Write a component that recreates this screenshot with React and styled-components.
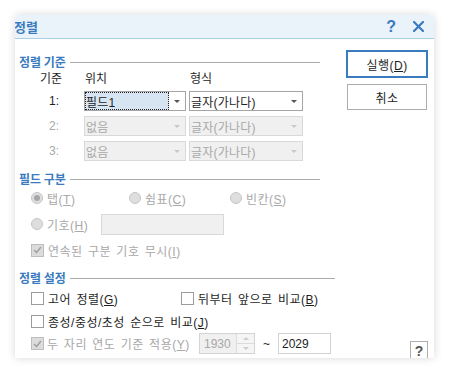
import React from "react";
import styled, { createGlobalStyle } from "styled-components";

const GlobalStyle = createGlobalStyle`
  html, body { margin: 0; padding: 0; background: #fff; }
  body {
    font-family: "Liberation Sans", "Noto Sans CJK KR", sans-serif;
    font-size: 12px;
    color: #1e1e1e;
  }
  * { box-sizing: border-box; }
  u { text-underline-offset: 1px; }
`;

const Stage = styled.div`
  width: 449px;
  height: 373px;
  padding: 15px 0 0 15px;
`;

const Dialog = styled.div`
  width: 419px;
  height: 343px;
  background: #fff;
  border-radius: 5px 5px 0 0;
  box-shadow: 0 0 9px rgba(0, 0, 0, 0.16);
  display: flex;
  flex-direction: column;
  overflow: hidden;
`;

const TitleBar = styled.div`
  height: 24px;
  flex: none;
  background: #eaf2fa;
  border-bottom: 1px solid #a9cfe3;
  display: flex;
  align-items: center;
  padding-right: 10px;
`;

const Title = styled.div`
  flex: 1;
  margin-left: -1px;
  font-family: "Noto Sans CJK KR", sans-serif;
  font-weight: bold;
  font-size: 13px;
  color: #3a7bbf;
`;

const TitleHelp = styled.span`
  font-family: "Liberation Sans", sans-serif;
  font-weight: bold;
  font-size: 16px;
  color: #3a7bbf;
  margin-right: 17px;
  line-height: 1;
`;

const Body = styled.div`
  flex: 1;
  display: flex;
`;

const LeftCol = styled.div`
  width: 332px;
  padding: 14px 0 0 4px;
  display: flex;
  flex-direction: column;
`;

const RightCol = styled.div`
  flex: 1;
  display: flex;
  flex-direction: column;
  align-items: flex-end;
  padding: 12px 7px 0 0;
  gap: 7px;
`;

const SectionHead = styled.div`
  display: flex;
  align-items: center;
  height: 16px;
  margin-top: ${(p) => p.$mt || 0}px;
  margin-right: ${(p) => p.$mr}px;
  font-family: "Noto Sans CJK KR", sans-serif;
  font-weight: bold;
  font-size: 12px;
  color: #3a7bbf;
  &::after {
    content: "";
    flex: 1;
    height: 1px;
    margin: 2px 0 0 4px;
    background: #ababab;
  }
`;

const CritGrid = styled.div`
  display: grid;
  grid-template-columns: 62px 102px 114px;
  grid-auto-rows: 20px;
  grid-template-rows: 17px;
  column-gap: 3px;
  row-gap: 5px;
`;

const ColHead = styled.div`
  padding-top: 3px;
  padding-left: ${(p) => p.$pl || 1}px;
  line-height: 14px;
`;

const RowLabel = styled.div`
  display: flex;
  align-items: center;
  padding-left: 30px;
  color: ${(p) => (p.$disabled ? "#a8a8a8" : "#1e1e1e")};
`;

const Select = styled.div`
  height: 20px;
  display: flex;
  border: 1px solid ${(p) => (p.$disabled ? "#d9d9d9" : "#a5a5a5")};
  background: ${(p) => (p.$disabled ? "#f0f0f0" : "#fff")};
  color: ${(p) => (p.$disabled ? "#a8a8a8" : "#1e1e1e")};
`;

const SelectValue = styled.div`
  flex: 1;
  display: flex;
  align-items: center;
  padding-left: 1px;
  letter-spacing: 0.2px;
  ${(p) =>
    p.$focused &&
    `
    background: #d7e5f3;
    outline: 1px dotted #222;
    outline-offset: -1px;
  `}
`;

const SelectArrow = styled.div`
  width: 16px;
  display: flex;
  align-items: center;
  justify-content: center;
  &::before {
    content: "";
    border-left: 3px solid transparent;
    border-right: 3px solid transparent;
    border-top: 3px solid ${(p) => (p.$disabled ? "#c8c8c8" : "#555")};
  }
`;

const OptRow = styled.div`
  display: flex;
  align-items: center;
  height: ${(p) => p.$h || 20}px;
  margin-top: ${(p) => p.$mt || 0}px;
  padding-left: 12px;
`;

const Option = styled.label`
  display: flex;
  align-items: center;
  gap: ${(p) => p.$gap || 4}px;
  width: ${(p) => (p.$w ? `${p.$w}px` : "auto")};
  flex: none;
  color: ${(p) => (p.$disabled ? "#a8a8a8" : "#1e1e1e")};
  white-space: nowrap;
  letter-spacing: 0.5px;
  word-spacing: 1.5px;
`;

const RadioMark = styled.span`
  width: 12px;
  height: 12px;
  border-radius: 50%;
  border: 1px solid #c6c6c6;
  background: #dedede;
  display: inline-flex;
  align-items: center;
  justify-content: center;
  flex: none;
  &::after {
    content: "";
    width: 6px;
    height: 6px;
    border-radius: 50%;
    background: ${(p) => (p.$checked ? "#a6a6a6" : "transparent")};
  }
`;

const CheckMark = styled.span`
  width: 13px;
  height: 13px;
  flex: none;
  border: 1px solid ${(p) => (p.$disabled ? "#bdbdbd" : "#9c9c9c")};
  background: ${(p) => (p.$disabled ? "#dcdcdc" : "#fff")};
  display: inline-flex;
  align-items: center;
  justify-content: center;
`;

const SymbolInput = styled.div`
  width: 123px;
  height: 21px;
  border: 1px solid #d9d9d9;
  background: #f0f0f0;
`;

const Spin = styled.div`
  width: 56px;
  height: 21px;
  display: flex;
  border: 1px solid #d3d3d3;
  background: #f0f0f0;
  color: #a8a8a8;
`;

const SpinValue = styled.div`
  flex: 1;
  display: flex;
  align-items: center;
  padding-left: 4px;
`;

const SpinButtons = styled.div`
  width: 18px;
  display: flex;
  flex-direction: column;
  border-left: 1px solid #dcdcdc;
  background: #f5f5f5;
`;

const SpinBtn = styled.div`
  flex: 1;
  display: flex;
  align-items: center;
  justify-content: center;
  & + & {
    border-top: 1px solid #dcdcdc;
  }
  &::before {
    content: "";
    border-left: 3px solid transparent;
    border-right: 3px solid transparent;
    ${(p) => (p.$up ? "border-bottom" : "border-top")}: 3px solid #cdcdcd;
  }
`;

const Tilde = styled.span`
  margin: 0 8px 0 8px;
  color: #1e1e1e;
`;

const YearBox = styled.div`
  width: 53px;
  height: 21px;
  display: flex;
  align-items: center;
  padding-left: 3px;
  border: 1px solid #d3d3d3;
  background: #fff;
`;

const Button = styled.button`
  width: 80px;
  height: 26px;
  flex: none;
  padding: 0;
  margin: 0;
  font-family: inherit;
  font-size: 12px;
  letter-spacing: 0.5px;
  color: #1e1e1e;
  background: #fff;
  border: 1px solid ${(p) => (p.$primary ? "#3a7bbf" : "#adadad")};
  box-shadow: ${(p) => (p.$primary ? "0 0 0 1px #3a7bbf" : "none")};
`;

const HelpBox = styled.div`
  margin-top: auto;
  margin-right: -1px;
  width: 18px;
  height: 17px;
  border: 1px solid #aeaeae;
  border-bottom: none;
  display: flex;
  align-items: center;
  justify-content: center;
  font-family: "Liberation Sans", sans-serif;
  font-weight: bold;
  font-size: 14px;
  color: #555;
  padding-top: 2px;
`;

const Check = () => (
  <svg width="9" height="8" viewBox="0 0 9 8">
    <path d="M1 4 L3.5 6.5 L8 1" fill="none" stroke="#a2a2a2" strokeWidth="1.6" />
  </svg>
);

const CloseIcon = () => (
  <svg width="11" height="11" viewBox="0 0 11 11">
    <path d="M1 1 L10 10 M10 1 L1 10" stroke="#3a7bbf" strokeWidth="2.2" strokeLinecap="square" />
  </svg>
);

const rows = [
  { n: "1:", a: "필드1", b: "글자(가나다)", disabled: false },
  { n: "2:", a: "없음", b: "글자(가나다)", disabled: true },
  { n: "3:", a: "없음", b: "글자(가나다)", disabled: true },
];

export default function App() {
  return (
    <>
      <GlobalStyle />
      <Stage>
        <Dialog>
          <TitleBar>
            <Title>정렬</Title>
            <TitleHelp>?</TitleHelp>
            <CloseIcon />
          </TitleBar>
          <Body>
            <LeftCol>
              <SectionHead $mr={27}>정렬 기준</SectionHead>
              <CritGrid>
                <ColHead $pl={21}>기준</ColHead>
                <ColHead>위치</ColHead>
                <ColHead>형식</ColHead>
                {rows.map((r, i) => (
                  <React.Fragment key={r.n}>
                    <RowLabel $disabled={r.disabled}>{r.n}</RowLabel>
                    <Select $disabled={r.disabled}>
                      <SelectValue $focused={i === 0}>{r.a}</SelectValue>
                      <SelectArrow $disabled={r.disabled} />
                    </Select>
                    <Select $disabled={r.disabled}>
                      <SelectValue>{r.b}</SelectValue>
                      <SelectArrow $disabled={r.disabled} />
                    </Select>
                  </React.Fragment>
                ))}
              </CritGrid>

              <SectionHead $mt={9} $mr={27}>필드 구분</SectionHead>
              <OptRow $mt={2}>
                <Option $w={98} $disabled>
                  <RadioMark $checked />
                  <span>탭(<u>T</u>)</span>
                </Option>
                <Option $w={101} $disabled>
                  <RadioMark />
                  <span>쉼표(<u>C</u>)</span>
                </Option>
                <Option $disabled>
                  <RadioMark />
                  <span>빈칸(<u>S</u>)</span>
                </Option>
              </OptRow>
              <OptRow $mt={5} $h={22}>
                <Option $w={70} $disabled>
                  <RadioMark />
                  <span>기호(<u>H</u>)</span>
                </Option>
                <SymbolInput />
              </OptRow>
              <OptRow $mt={5}>
                <Option $disabled>
                  <CheckMark $disabled>
                    <Check />
                  </CheckMark>
                  <span>연속된 구분 기호 무시(<u>I</u>)</span>
                </Option>
              </OptRow>

              <SectionHead $mt={9} $mr={12}>정렬 설정</SectionHead>
              <OptRow $mt={3}>
                <Option $w={150}>
                  <CheckMark />
                  <span>고어 정렬(<u>G</u>)</span>
                </Option>
                <Option>
                  <CheckMark />
                  <span>뒤부터 앞으로 비교(<u>B</u>)</span>
                </Option>
              </OptRow>
              <OptRow $mt={3}>
                <Option>
                  <CheckMark />
                  <span>종성/중성/초성 순으로 비교(<u>J</u>)</span>
                </Option>
              </OptRow>
              <OptRow $mt={2} $h={21}>
                <Option $w={168} $gap={3} $disabled>
                  <CheckMark $disabled>
                    <Check />
                  </CheckMark>
                  <span>두 자리 연도 기준 적용(<u>Y</u>)</span>
                </Option>
                <Spin>
                  <SpinValue>1930</SpinValue>
                  <SpinButtons>
                    <SpinBtn $up />
                    <SpinBtn />
                  </SpinButtons>
                </Spin>
                <Tilde>~</Tilde>
                <YearBox>2029</YearBox>
              </OptRow>
            </LeftCol>
            <RightCol>
              <Button $primary>
                실행(<u>D</u>)
              </Button>
              <Button>취소</Button>
              <HelpBox>?</HelpBox>
            </RightCol>
          </Body>
        </Dialog>
      </Stage>
    </>
  );
}
